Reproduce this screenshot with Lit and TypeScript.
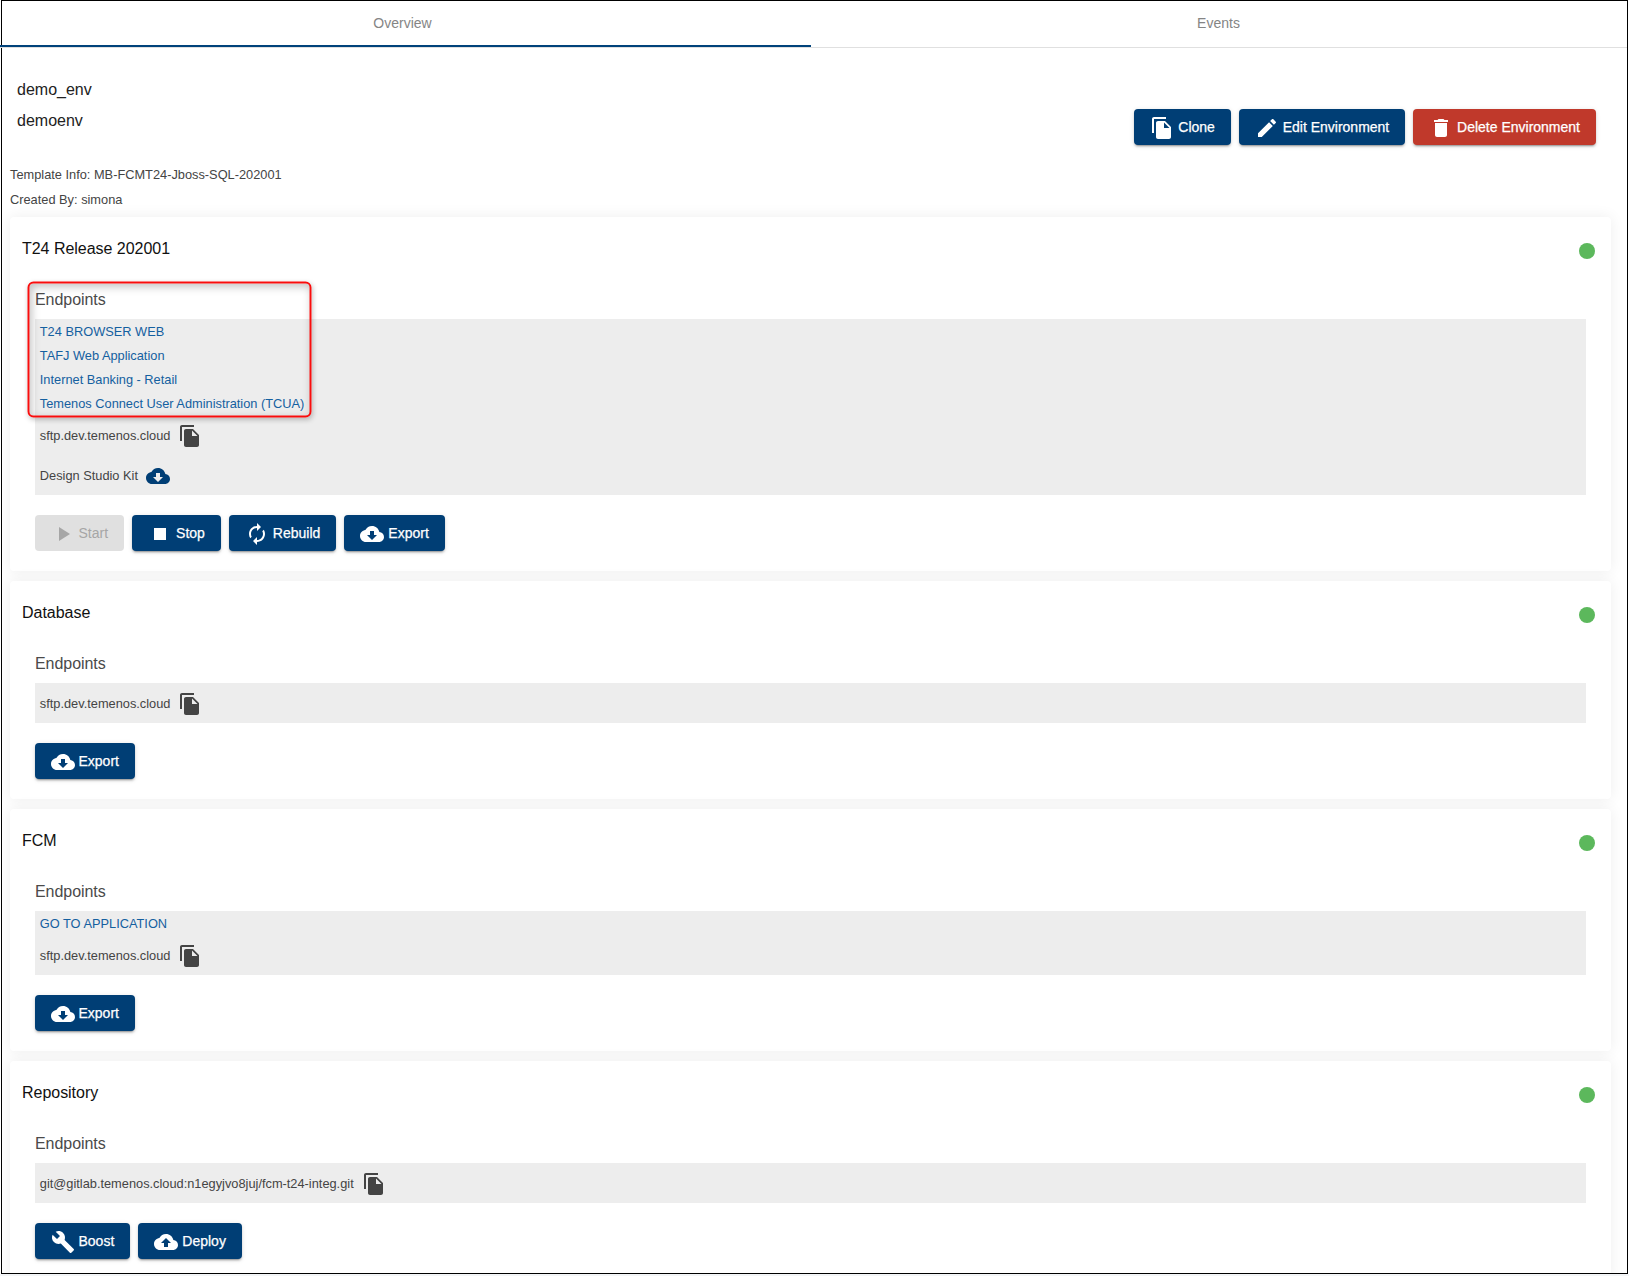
import { LitElement, html, css, svg } from "lit";
import { customElement, property } from "lit/decorators.js";

const ICONS: Record<string, string> = {
  copy: "M16 1H4c-1.1 0-2 .9-2 2v14h2V3h12V1zm-1 4l6 6v10c0 1.1-.9 2-2 2H7.99C6.89 23 6 22.1 6 21l.01-14c0-1.1.89-2 1.99-2h7zm-1 7h5.5L14 6.5V12z",
  edit: "M3 17.25V21h3.75L17.81 9.94l-3.75-3.75L3 17.25zM20.71 7.04c.39-.39.39-1.02 0-1.41l-2.34-2.34c-.39-.39-1.02-.39-1.41 0l-1.83 1.83 3.75 3.75 1.83-1.83z",
  trash: "M6 19c0 1.1.9 2 2 2h8c1.1 0 2-.9 2-2V7H6v12zM19 4h-3.5l-1-1h-5l-1 1H5v2h14V4z",
  play: "M8 5v14l11-7z",
  stop: "M6 6h12v12H6z",
  renew: "M12 6v3l4-4-4-4v3c-4.42 0-8 3.58-8 8 0 1.57.46 3.03 1.24 4.26L6.7 14.8c-.45-.83-.7-1.79-.7-2.8 0-3.31 2.69-6 6-6zm6.76 1.74L17.3 9.2c.44.84.7 1.79.7 2.8 0 3.31-2.69 6-6 6v-3l-4 4 4 4v-3c4.42 0 8-3.58 8-8 0-1.57-.46-3.03-1.24-4.26z",
  download: "M19.35 10.04C18.67 6.59 15.64 4 12 4 9.11 4 6.6 5.64 5.35 8.04 2.34 8.36 0 10.91 0 14c0 3.31 2.69 6 6 6h13c2.76 0 5-2.24 5-5 0-2.64-2.05-4.78-4.65-4.96zM17 13l-5 5-5-5h3V9h4v4h3z",
  upload: "M19.35 10.04C18.67 6.59 15.64 4 12 4 9.11 4 6.6 5.64 5.35 8.04 2.34 8.36 0 10.91 0 14c0 3.31 2.69 6 6 6h13c2.76 0 5-2.24 5-5 0-2.64-2.05-4.78-4.65-4.96zM14 13v4h-4v-4H7l5-5 5 5h-3z",
  wrench: "M22.7 19l-9.1-9.1c.9-2.3.4-5-1.5-6.9-2-2-5-2.4-7.4-1.3L9 6 6 9 1.6 4.7C.4 7.1.9 10.1 2.9 12.1c1.9 1.9 4.6 2.4 6.9 1.5l9.1 9.1c.4.4 1 .4 1.4 0l2.3-2.3c.5-.4.5-1.1.1-1.4z",
};

const icon = (name: string) =>
  html`<svg class="icon icon-${name}" width="24" height="24" viewBox="0 0 24 24">${svg`<path d=${ICONS[name]}></path>`}</svg>`;

interface Action { label: string; icon: string; kind?: string }
interface Endpoint { label: string; link?: boolean; icon?: string }
interface Service { title: string; endpoints: Endpoint[]; actions: Action[]; highlight?: boolean }

const SFTP: Endpoint = { label: "sftp.dev.temenos.cloud", icon: "copy" };
const EXPORT: Action = { label: "Export", icon: "download" };

const SERVICES: Service[] = [
  {
    title: "T24 Release 202001",
    highlight: true,
    endpoints: [
      { label: "T24 BROWSER WEB", link: true },
      { label: "TAFJ Web Application", link: true },
      { label: "Internet Banking - Retail", link: true },
      { label: "Temenos Connect User Administration (TCUA)", link: true },
      SFTP,
      { label: "Design Studio Kit", icon: "download" },
    ],
    actions: [
      { label: "Start", icon: "play", kind: "disabled" },
      { label: "Stop", icon: "stop" },
      { label: "Rebuild", icon: "renew" },
      EXPORT,
    ],
  },
  { title: "Database", endpoints: [SFTP], actions: [EXPORT] },
  { title: "FCM", endpoints: [{ label: "GO TO APPLICATION", link: true }, SFTP], actions: [EXPORT] },
  {
    title: "Repository",
    endpoints: [{ label: "git@gitlab.temenos.cloud:n1egyjvo8juj/fcm-t24-integ.git", icon: "copy" }],
    actions: [
      { label: "Boost", icon: "wrench" },
      { label: "Deploy", icon: "upload" },
    ],
  },
];

@customElement("action-button")
class ActionButton extends LitElement {
  @property({ attribute: false }) action!: Action;
  static styles = css`
    :host { display: block; }
    .btn {
      display: flex; align-items: center; gap: 3.9px; height: 36px; padding: 0 16px;
      border: 0; border-radius: 4px; background: #003e75; color: #fff; white-space: nowrap;
      font: 500 14px/36px "Liberation Sans", Arial, sans-serif;
      box-shadow: 0 3px 1px -2px rgba(0,0,0,.2), 0 2px 2px 0 rgba(0,0,0,.14), 0 1px 5px 0 rgba(0,0,0,.12);
    }
    .danger { background: #c0392b; }
    .disabled { background: #e0e0e0; color: #a6a6a6; box-shadow: none; }
    .icon { display: block; fill: currentColor; margin-top: 2px; }
    .label { -webkit-text-stroke: .25px currentColor; }
    .disabled .label { -webkit-text-stroke: 0; }
  `;
  render() {
    return html`<button class="btn ${this.action.kind ?? ""}" ?disabled=${this.action.kind === "disabled"}>
      ${icon(this.action.icon)}<span class="label">${this.action.label}</span>
    </button>`;
  }
}

@customElement("service-card")
class ServiceCard extends LitElement {
  @property({ attribute: false }) service!: Service;
  static styles = css`
    :host { display: block; }
    .card {
      background: #fff; border-radius: 4px; padding: 0 25px 20px;
      box-shadow: 0 0 15px rgba(0,0,0,.07);
    }
    .head {
      display: flex; justify-content: space-between; align-items: center;
      height: 68px; margin: 0 -9px 0 -13px;
    }
    .title { margin: 0; padding-bottom: 4px; font-size: 16px; font-weight: 400; line-height: 20px; color: #111; letter-spacing: -.03px; }
    .dot { width: 16px; height: 16px; border-radius: 50%; background: #5cb85c; }
    .endpoints { position: relative; }
    .caption { height: 34px; line-height: 29px; font-size: 16px; color: #4a4a4a; letter-spacing: -.06px; }
    .list { background: #ededed; font-size: 12.8px; color: #444; }
    .row { display: flex; align-items: center; gap: 8px; height: 40px; padding-left: 4.8px; }
    .row.link { height: 24px; color: #1460a0; }
    .row .icon { display: block; margin-top: 2px; fill: #444; }
    .row .icon-download { fill: #003e75; }
    .marker {
      position: absolute; left: -8px; top: -4px; width: 280px; height: 132px;
      transform: translate(.5px, .5px);
      border: 2px solid #f90d0d; border-radius: 6px;
      box-shadow: 1px 2px 5px rgba(0,0,0,.22), inset 2px 3px 8px rgba(0,0,0,.25);
    }
    .actions { display: flex; gap: 8.1px; padding-top: 20px; margin-left: -.4px; }
  `;
  render() {
    const s = this.service;
    return html`<section class="card">
      <header class="head"><h2 class="title">${s.title}</h2><span class="dot"></span></header>
      <div class="endpoints">
        <div class="caption">Endpoints</div>
        <div class="list">
          ${s.endpoints.map((e) => html`<div class="row ${e.link ? "link" : ""}">
            <span>${e.label}</span>${e.icon ? icon(e.icon) : ""}
          </div>`)}
        </div>
        ${s.highlight ? html`<div class="marker"></div>` : ""}
      </div>
      <div class="actions">${s.actions.map((a) => html`<action-button .action=${a}></action-button>`)}</div>
    </section>`;
  }
}

@customElement("app-root")
class AppRoot extends LitElement {
  static styles = css`
    :host {
      display: block; box-sizing: border-box; width: 1629px; height: 1276px; overflow: hidden;
      background: linear-gradient(#f3f5f7, #f3f5f7) 0 1274px / 100% 2px no-repeat, #fff;
      font-family: "Liberation Sans", Arial, sans-serif;
    }
    .frame {
      display: flex; flex-direction: column;
      box-sizing: border-box; width: 1627px; height: 1274px; margin-left: 1px;
      border: 1px solid #000; background: #fff;
    }
    .tabs {
      flex: none; display: grid; grid-template-columns: 811px 1fr; height: 46px; margin-left: -2px;
      border-bottom: 1px solid #e0e0e0;
    }
    .tab {
      box-sizing: border-box; height: 46px; line-height: 45px; text-align: center;
      font-size: 14px; color: #858585;
    }
    .tab:last-child { padding-right: 1px; }
    .active { border-bottom: 2px solid #00427a; padding-right: 6px; }
    .content { flex: 1; min-height: 0; overflow: hidden; }
    .intro { display: flex; justify-content: space-between; height: 114px; padding: 0 31px 0 15px; box-sizing: border-box; }
    .names { padding-top: 26px; font-size: 16px; line-height: 31px; color: #222; }
    .tools { display: flex; gap: 7.9px; padding-top: 61px; }
    .meta { height: 55px; padding-left: 8px; font-size: 12.8px; line-height: 25px; color: #444; }
    .cards { display: flex; flex-direction: column; gap: 10px; padding: 0 16px 0 8px; }
  `;
  render() {
    return html`<main class="frame">
      <nav class="tabs"><div class="tab active">Overview</div><div class="tab">Events</div></nav>
      <div class="content">
        <div class="intro">
          <div class="names"><div>demo_env</div><div>demoenv</div></div>
          <div class="tools">
            <action-button .action=${{ label: "Clone", icon: "copy" }}></action-button>
            <action-button .action=${{ label: "Edit Environment", icon: "edit" }}></action-button>
            <action-button .action=${{ label: "Delete Environment", icon: "trash", kind: "danger" }}></action-button>
          </div>
        </div>
        <div class="meta"><div>Template Info: MB-FCMT24-Jboss-SQL-202001</div><div>Created By: simona</div></div>
        <div class="cards">${SERVICES.map((s) => html`<service-card .service=${s}></service-card>`)}</div>
      </div>
    </main>`;
  }
}
